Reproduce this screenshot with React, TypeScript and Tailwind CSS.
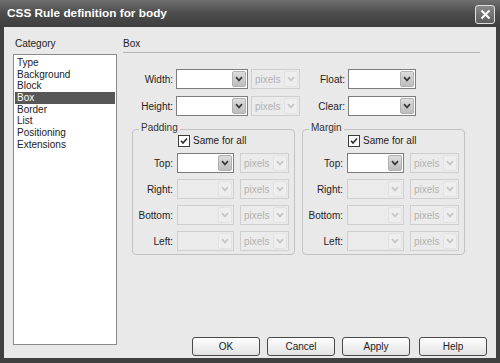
import React from "react";

function Chevron({ color }: { color: string }) {
  return (
    <svg width="8" height="6" viewBox="0 0 8 6">
      <path d="M1 1.2 L4 4.4 L7 1.2" fill="none" stroke={color} strokeWidth="1.7" />
    </svg>
  );
}

function Select({
  w,
  enabled,
  text,
}: {
  w: string;
  enabled: boolean;
  text?: string;
}) {
  return (
    <div
      className={`flex h-[20px] shrink-0 border ${w} ${
        enabled ? "border-[#7d7d7d] bg-white" : "border-[#cfcfcf] bg-[#ebebeb]"
      }`}
    >
      <div
        className={`flex-1 flex items-center pl-[3px] text-[10px] ${
          enabled ? "text-[#222]" : "text-[#b2b2b2]"
        }`}
      >
        {text}
      </div>
      <div
        className={`w-[14px] my-[1px] mr-[1px] rounded-[2px] flex items-center justify-center ${
          enabled
            ? "bg-gradient-to-b from-[#dcdcdc] to-[#bdbdbd] border border-[#b0b0b0]"
            : "bg-[#eeeeee] border border-[#e2e2e2]"
        }`}
      >
        <Chevron color={enabled ? "#3a3a3a" : "#c6c6c6"} />
      </div>
    </div>
  );
}

function Checkbox() {
  return (
    <div className="w-[12px] h-[12px] border border-[#3c3c3c] bg-white flex items-center justify-center">
      <svg width="8" height="8" viewBox="0 0 8 8">
        <path d="M1 3.8 L3 6 L7 1.5" fill="none" stroke="#2a2a2a" strokeWidth="1.6" />
      </svg>
    </div>
  );
}

function BoxRow({ label, enabled }: { label: string; enabled: boolean }) {
  return (
    <div className="flex items-center h-[20px]">
      <div className="w-[40px] text-right text-[10px] text-[#222]">{label}</div>
      <div className="w-[4px]" />
      <Select w="w-[57px]" enabled={enabled} />
      <div className="w-[6px]" />
      <Select w="w-[49px]" enabled={false} text="pixels" />
    </div>
  );
}

function Group({ title }: { title: string }) {
  return (
    <div className="relative w-[163px] h-[126px] border border-[#c2c2c2] rounded-[4px]">
      <span className="absolute -top-[8px] left-[6px] px-[2px] bg-[#e9e9e9] text-[10px] leading-[12px] text-[#333]">
        {title}
      </span>
      <div className="flex items-center mt-[4px] ml-[45px] h-[13px]">
        <Checkbox />
        <span className="ml-[3px] text-[10px] text-[#222]">Same for all</span>
      </div>
      <div className="flex flex-col gap-[6px] mt-[6px]">
        <BoxRow label="Top:" enabled={true} />
        <BoxRow label="Right:" enabled={false} />
        <BoxRow label="Bottom:" enabled={false} />
        <BoxRow label="Left:" enabled={false} />
      </div>
    </div>
  );
}

function Btn({ label }: { label: string }) {
  return (
    <div className="w-[68px] h-[19px] rounded-[3px] border border-[#4a4a4a] bg-gradient-to-b from-[#ffffff] to-[#e2e2e2] flex items-center justify-center text-[10px] text-[#222]">
      {label}
    </div>
  );
}

export default function App() {
  const items = [
    "Type",
    "Background",
    "Block",
    "Box",
    "Border",
    "List",
    "Positioning",
    "Extensions",
  ];
  return (
    <div
      className="w-[500px] h-[363px] flex flex-col bg-[#404040] overflow-hidden"
      style={{ fontFamily: '"Liberation Sans", Arial, sans-serif' }}
    >
      {/* Title bar */}
      <div className="h-[27px] shrink-0 flex items-center justify-between pl-[7px] pr-[5px] bg-gradient-to-b from-[#707070] via-[#4c4c4c] to-[#3e3e3e]">
        <span className="text-white font-bold text-[11.8px]">CSS Rule definition for body</span>
        <div className="w-[20px] h-[19px] mt-[2px] rounded-[3px] border border-[#e0e0e0] bg-gradient-to-b from-[#8a8a8a] to-[#5e5e5e] flex items-center justify-center">
          <svg width="11" height="11" viewBox="0 0 11 11">
            <path d="M1.5 1.5 L9.5 9.5 M9.5 1.5 L1.5 9.5" stroke="white" strokeWidth="2" />
          </svg>
        </div>
      </div>

      {/* Body */}
      <div className="flex-1 mx-[4px] mb-[5px] bg-[#e9e9e9] flex">
        {/* Left column */}
        <div className="ml-[9px] w-[104px] flex flex-col">
          <div className="mt-[11px] ml-[2px] h-[12px] text-[10px] leading-[12px] text-[#222]">
            Category
          </div>
          <div className="mt-[4px] h-[291px] border border-[#8a8a8a] bg-white pt-[2px] px-[1px]">
            {items.map((it) => (
              <div
                key={it}
                className={`h-[11.7px] leading-[11.7px] pl-[2px] text-[10px] ${
                  it === "Box" ? "bg-[#575757] text-white" : "text-[#222]"
                }`}
              >
                {it}
              </div>
            ))}
          </div>
        </div>

        {/* Right pane */}
        <div className="ml-[6px] flex-1 flex flex-col pr-[9px]">
          <div className="mt-[11px] w-[357px] h-[15px] border-b border-[#b4b4b4] text-[10px] leading-[12px] text-[#222]">
            Box
          </div>

          <div className="mt-[16px] flex flex-col gap-[7px]">
            <div className="flex items-center h-[20px]">
              <div className="w-[50px] text-right text-[10px] text-[#222]">Width:</div>
              <div className="w-[3px]" />
              <Select w="w-[72px]" enabled={true} />
              <div className="w-[3px]" />
              <Select w="w-[49px]" enabled={false} text="pixels" />
              <div className="w-[42px] ml-[3px] text-right text-[10px] text-[#222]">Float:</div>
              <div className="w-[3px]" />
              <Select w="w-[68px]" enabled={true} />
            </div>
            <div className="flex items-center h-[20px]">
              <div className="w-[50px] text-right text-[10px] text-[#222]">Height:</div>
              <div className="w-[3px]" />
              <Select w="w-[72px]" enabled={true} />
              <div className="w-[3px]" />
              <Select w="w-[49px]" enabled={false} text="pixels" />
              <div className="w-[42px] ml-[3px] text-right text-[10px] text-[#222]">Clear:</div>
              <div className="w-[3px]" />
              <Select w="w-[68px]" enabled={true} />
            </div>
          </div>

          <div className="mt-[13px] ml-[9px] flex gap-[7px]">
            <Group title="Padding" />
            <Group title="Margin" />
          </div>

          <div className="flex-1" />
          <div className="flex justify-end mb-[2px]">
            <Btn label="OK" />
            <div className="w-[7px]" />
            <Btn label="Cancel" />
            <div className="w-[7px]" />
            <Btn label="Apply" />
            <div className="w-[9px]" />
            <Btn label="Help" />
          </div>
        </div>
      </div>
    </div>
  );
}
